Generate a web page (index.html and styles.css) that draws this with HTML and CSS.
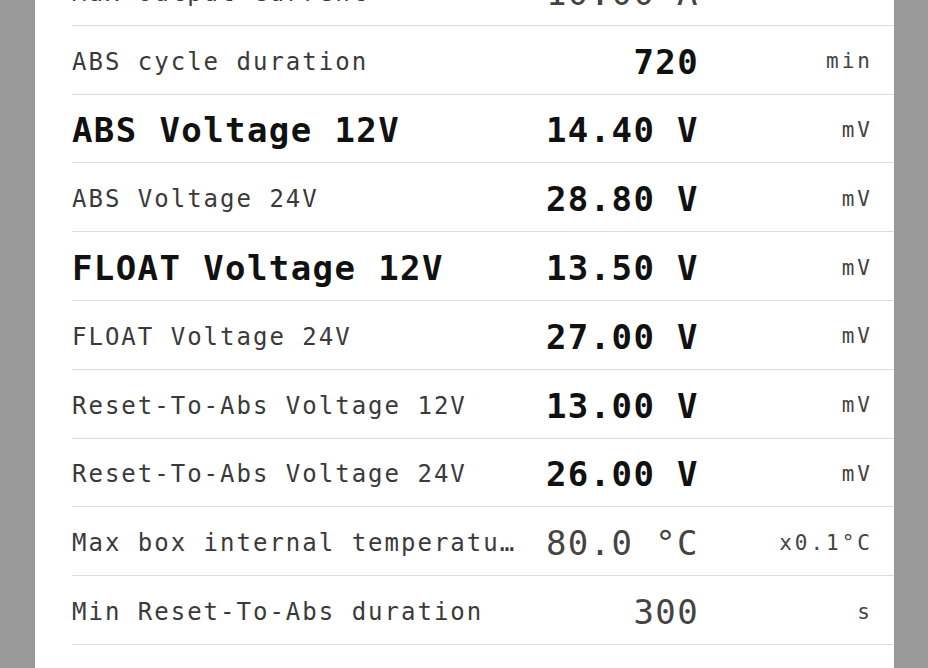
FILE: index.html
```html
<!DOCTYPE html>
<html lang="en">
<head>
    <meta charset="UTF-8">
    <meta name="viewport" content="width=device-width, initial-scale=1.0">
    <title>Charger Settings</title>
    <link rel="stylesheet" href="styles.css">
</head>
<body>

<div class="panel">
    <ul class="param-list">
        <li class="param-row">
            <span class="param-name">Max output current</span>
            <span class="param-value">10.00 A</span>
            <span class="param-unit">mA</span>
        </li>
        <li class="param-row">
            <span class="param-name">ABS cycle duration</span>
            <span class="param-value strong">720</span>
            <span class="param-unit">min</span>
        </li>
        <li class="param-row">
            <span class="param-name strong">ABS Voltage 12V</span>
            <span class="param-value strong">14.40 V</span>
            <span class="param-unit">mV</span>
        </li>
        <li class="param-row">
            <span class="param-name">ABS Voltage 24V</span>
            <span class="param-value strong">28.80 V</span>
            <span class="param-unit">mV</span>
        </li>
        <li class="param-row">
            <span class="param-name strong">FLOAT Voltage 12V</span>
            <span class="param-value strong">13.50 V</span>
            <span class="param-unit">mV</span>
        </li>
        <li class="param-row">
            <span class="param-name">FLOAT Voltage 24V</span>
            <span class="param-value strong">27.00 V</span>
            <span class="param-unit">mV</span>
        </li>
        <li class="param-row">
            <span class="param-name">Reset-To-Abs Voltage 12V</span>
            <span class="param-value strong">13.00 V</span>
            <span class="param-unit">mV</span>
        </li>
        <li class="param-row">
            <span class="param-name">Reset-To-Abs Voltage 24V</span>
            <span class="param-value strong">26.00 V</span>
            <span class="param-unit">mV</span>
        </li>
        <li class="param-row">
            <span class="param-name">Max box internal temperature</span>
            <span class="param-value">80.0 °C</span>
            <span class="param-unit">x0.1°C</span>
        </li>
        <li class="param-row">
            <span class="param-name">Min Reset-To-Abs duration</span>
            <span class="param-value">300</span>
            <span class="param-unit">s</span>
        </li>
        <li class="param-row">
            <span class="param-name">Min ABS duration</span>
            <span class="param-value strong">60</span>
            <span class="param-unit">min</span>
        </li>
    </ul>
</div>

</body>
</html>
```

FILE: styles.css
```css
body {
    font-family: "DejaVu Sans Mono", "Liberation Mono", monospace;
    background-color: #999999;
    margin: 0;
    padding: 0;
    overflow: hidden;
}

.panel {
    width: 859px;
    min-height: 100vh;
    margin-left: 35px;
    background: white;
}

.param-list {
    list-style: none;
    margin: -43px 0 0 0;
    padding: 0 0 0 37px;
}

.param-row {
    display: grid;
    grid-template-columns: 452px 175px 1fr;
    align-items: center;
    height: 68.8px;
    box-sizing: border-box;
    padding-right: 21px;
    border-bottom: 1px solid #dddddd;
    color: #3a3a3a;
}

.param-name {
    font-size: 24px;
    letter-spacing: 2px;
    padding-top: 4px;
    white-space: nowrap;
    overflow: hidden;
    text-overflow: ellipsis;
}

.param-name.strong {
    font-size: 34px;
    letter-spacing: 1.4px;
    font-weight: bold;
    color: #111;
}

.param-value {
    font-size: 34px;
    letter-spacing: 1.4px;
    padding-top: 4px;
    text-align: right;
    white-space: nowrap;
    color: #444;
}

.param-value.strong {
    font-weight: bold;
    color: #111;
}

.param-unit {
    font-size: 21px;
    letter-spacing: 3px;
    padding-top: 3px;
    text-align: right;
    white-space: nowrap;
    color: #444;
}
```
